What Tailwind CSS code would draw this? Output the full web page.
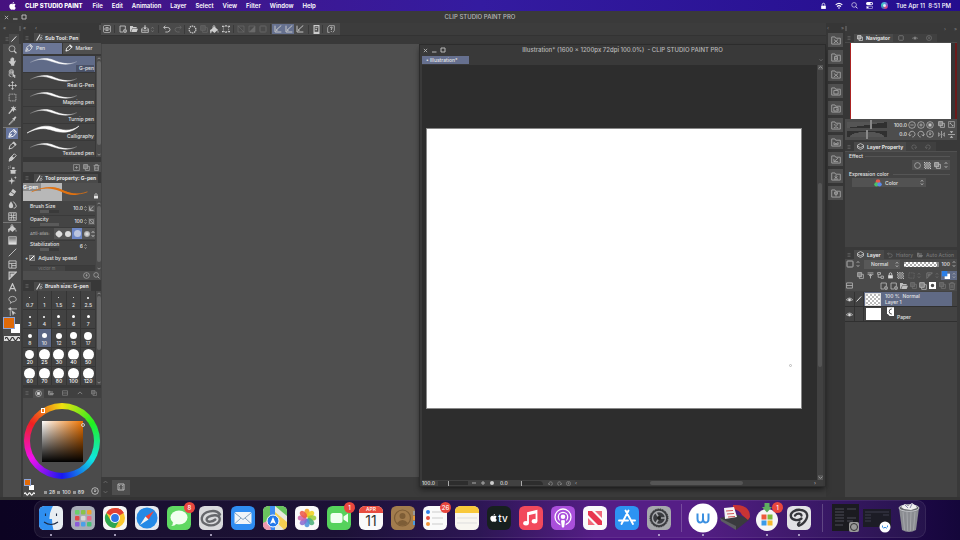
<!DOCTYPE html>
<html lang="en">
<head>
<meta charset="utf-8">
<title>CLIP STUDIO PAINT PRO</title>
<script src="https://cdn.jsdelivr.net/npm/@tailwindcss/browser@4"></script>
</head>
<body class="h-screen overflow-hidden flex flex-col bg-[#3b3b3b] text-[#e4e4e4] font-['Inter','Liberation_Sans',sans-serif] text-[5px] leading-[8px] font-medium select-none">

<svg class="absolute size-0" aria-hidden="true">
  <defs>
    <linearGradient id="fade" x1="0" x2="1"><stop offset="0" stop-color="#fff" stop-opacity=".15"/><stop offset=".3" stop-color="#fff"/><stop offset=".75" stop-color="#fff"/><stop offset="1" stop-color="#fff" stop-opacity=".15"/></linearGradient>
    <linearGradient id="greyfade" x1="0" x2="0" y1="0" y2="1"><stop offset="0" stop-color="#666"/><stop offset="1" stop-color="#eee"/></linearGradient>
  </defs>
  <symbol id="apple" viewBox="0 0 12 14"><path fill="currentColor" d="M8.700 0c.1 1.500-1.200 3-2.700 3C5.800 1.500 7.200.1 8.700 0zM6.200 3.800c.7 0 1.500-.7 2.700-.6 1 0 2 .6 2.500 1.400-2.200 1.400-1.800 4.400.4 5.300C11 12 10 13.600 8.700 13.600c-.9 0-1.300-.5-2.300-.5s-1.500.5-2.300.5C2.400 13.600.4 10.400.4 7.600c0-2.900 1.800-4.400 3.500-4.400 1 0 1.800.6 2.300.6z"/></symbol>
  <symbol id="search" viewBox="0 0 12 12"><circle cx="5.300" cy="5" r="4" fill="none" stroke="currentColor"/><path d="M8.200 8l3 3" stroke="currentColor" stroke-width="1.500"/></symbol>
  <symbol id="hand" viewBox="0 0 12 12"><path fill="currentColor" d="M3.200 5.500V2.300q.7-.8 1.200 0V1.200q.7-.8 1.300 0v-.5q.7-.7 1.300 0v1q.7-.7 1.200 0V6l1.400-1.300q1-.3 1 .5L8.300 9.600V11.500H4.200V10L1 6.500q-.3-1.200.8-1z"/></symbol>
  <symbol id="object" viewBox="0 0 12 12"><g fill="none" stroke="currentColor"><circle cx="4.500" cy="3.800" r="3"/><path d="M1.500 6v3l3 1.500M4.500 3.800l3 2M3 2.500h3v2.500H3z"/></g><path fill="currentColor" d="M6 5.500l5 4-2 .2.900 2-1.300.3-.8-2L6.200 11z"/></symbol>
  <symbol id="move" viewBox="0 0 12 12"><path d="M6 1.500v9M1.500 6h9" stroke="currentColor"/><path fill="currentColor" d="M6 0l2 2.500H4zM6 12l2-2.500H4zM0 6l2.500-2v4zM12 6L9.500 4v4z"/></symbol>
  <symbol id="marquee" viewBox="0 0 12 12"><rect x="1.500" y="1.500" width="9" height="9" fill="none" stroke="currentColor" stroke-dasharray="2 1"/></symbol>
  <symbol id="wand" viewBox="0 0 12 12"><path d="M1 11.500L6 6" stroke="currentColor" stroke-width="1.800"/><path fill="currentColor" d="M7 .5l1 2.800 3-1-1.700 2.500L11.500 7l-3-.3L7.500 9.500 6.300 7 3.500 7l2-2L4 2.500l2.500.6z"/></symbol>
  <symbol id="dropper" viewBox="0 0 12 12"><path fill="currentColor" d="M7.200 3l2-2.200q1.600-.5 2 1.200L9 4.500l.6.7-1 1L5.700 3.500l1-1z"/><path d="M7 4.800L2.200 9.600l-1 1.800 1.800-.8L8 5.800" stroke="currentColor" fill="none"/></symbol>
  <symbol id="pen" viewBox="0 0 12 12"><path d="M1 11l1.500-6L6.500 2l3.800 4L7 9.800z" fill="none" stroke="currentColor" stroke-width="1.200"/><path fill="currentColor" d="M6.500.8L8 0l4 4-.9 1.400zM1 11l3-5 1.500 1.500z"/></symbol>
  <symbol id="pencil" viewBox="0 0 12 12"><path d="M1.500 10.500l1-4.500L7 2.500l2.800 3L5.500 9.500z" fill="none" stroke="currentColor" stroke-width="1.300"/><path fill="currentColor" d="M5.800 1.500L8 .6l3.500 3.700L10 6.500zM1 11.200l.5-3 2.300 2z"/></symbol>
  <symbol id="brush" viewBox="0 0 12 12"><path d="M1.500 10.500l1-3.500L8.500 1l2.500 2.500L5 9.500z" fill="none" stroke="currentColor" stroke-width="1.300"/><path fill="currentColor" d="M5 3.500L8.500 7 5 10 1 11.500 2.300 7z"/></symbol>
  <symbol id="airbrush" viewBox="0 0 12 12"><path fill="currentColor" d="M3 6.500h8.500l-.8 1.300H10V11.500H3.500V7.800H3zM5.500 3h3.300v2.700H5.500z"/><path d="M.5 2.500h1M2.500 1.500h1M2.500 3.500h1M.5 4.800h1" stroke="currentColor"/></symbol>
  <symbol id="spark" viewBox="0 0 12 12"><path fill="currentColor" d="M5 1.500l1.100 3.900L10 6.500 6.100 7.600 5 11.500 3.900 7.600 0 6.500l3.900-1.100zM9.800 0l.5 1.600 1.600.5-1.600.5-.5 1.600-.5-1.600L7.700 2.100l1.600-.5z"/></symbol>
  <symbol id="eraser" viewBox="0 0 12 12"><path fill="currentColor" d="M6.500 1L11 4.500 8.500 8 4 4.700zM3.400 5.400L8 8.800 6.500 10.800H3L.8 8.800z"/></symbol>
  <symbol id="blend" viewBox="0 0 12 12"><path fill="currentColor" d="M4 1.500q3 4 3 6.500a3 3 0 0 1-6 0q0-2.500 3-6.500z"/><path d="M7 2q4 4 4 6a2.700 2.700 0 0 1-3.500 2.700" stroke="currentColor" stroke-width="1.300" fill="none"/></symbol>
  <symbol id="liquify" viewBox="0 0 12 12"><path d="M1 1h10v10H1zM4 1q2 5 0 10M8 1q-2 5 0 10M1 4q5 2 10 0M1 8q5-2 10 0" fill="none" stroke="currentColor" stroke-width="1.100"/></symbol>
  <symbol id="bucket" viewBox="0 0 12 12"><path fill="currentColor" d="M5.500 2L11 6.500q-2 .3-5 4.300L1 6.500zM10.500 7l1 2.500q-.7 1.300-1.500 0zM0 7l1.500-1.500L2.500 8 1.500 11H.5z"/><path d="M4 5V1.500q1.500-1.500 2.500 0V5" stroke="currentColor" fill="none"/></symbol>
  <symbol id="gradient" viewBox="0 0 12 12"><rect x="1" y="1" width="10" height="10" fill="url(#greyfade)" stroke="#ccc"/></symbol>
  <symbol id="line" viewBox="0 0 12 12"><path d="M1 11L11 1" stroke="currentColor" stroke-width="1.200"/></symbol>
  <symbol id="frame" viewBox="0 0 12 12"><path d="M1.200 1.200h9.600v9.600H1.200zM1.200 4.500h9.600M5 4.500v6.300M5 7.500h5.800" fill="none" stroke="currentColor" stroke-width="1.200"/></symbol>
  <symbol id="ruler" viewBox="0 0 12 12"><path d="M1.500 1.500h9.500L1.500 11zM4 4h2.500L4 6.500z" fill="none" stroke="currentColor" stroke-width="1.600"/></symbol>
  <symbol id="text" viewBox="0 0 12 12"><path d="M1.500 11L6 1l4.500 10M3.300 7.500h5.400" fill="none" stroke="currentColor" stroke-width="1.600"/></symbol>
  <symbol id="balloon" viewBox="0 0 12 12"><path d="M4 9Q1 8 1 5.200 1.500 1.800 6 1.800t5 3.400T6 9.200L3 11.200z" fill="none" stroke="currentColor"/></symbol>
  <symbol id="correct" viewBox="0 0 12 12"><path d="M0 2.500h12M3 0v12" stroke="currentColor"/><path fill="currentColor" d="M4.500 4l6.500 4.500-2.800.3L6.500 11.500zM1.700 1.200h2.700v2.700H1.700z"/></symbol>
  <symbol id="nib" viewBox="0 0 12 12"><path d="M1 11L10.500.8" stroke="currentColor" stroke-width="2"/></symbol>
  <symbol id="brushset" viewBox="0 0 12 12"><path d="M1 11L7 1" stroke="currentColor" stroke-width="1.800"/><path d="M6.500 9l2-4 2 2.500-2.500 3zM10 4V2" stroke="currentColor" fill="none"/></symbol>
  <symbol id="new" viewBox="0 0 12 12"><path d="M6 10.500H1.500v-9h8V6" fill="none" stroke="currentColor" stroke-width="1.200"/><circle cx="9" cy="9" r="2.500" fill="none" stroke="currentColor"/><path d="M9 7.500v3M7.500 9h3" stroke="currentColor"/></symbol>
  <symbol id="folder" viewBox="0 0 12 12"><path fill="currentColor" d="M0 10.500V1.500h4l1 1.500h5v2H3.500L1 10zM3.800 5.800H12L10 10.500H1.800z"/></symbol>
  <symbol id="save" viewBox="0 0 12 12"><path d="M1 6v5h10V6L9.500 4M1 6l1.500-2M1 7.500h3l1 1.300h2l1-1.300h3" fill="none" stroke="currentColor" stroke-width="1.200"/><path fill="currentColor" d="M5.200.5h1.600v3.300h2L6 7 3.200 3.800h2z"/></symbol>
  <symbol id="spin" viewBox="0 0 6 12"><path d="M1 4.500L3 2l2 2.500M1 7.500L3 10l2-2.500" fill="none" stroke="currentColor"/></symbol>
  <symbol id="undo" viewBox="0 0 12 12"><path d="M3.500 1L1 3.700l2.700 2.500M1.200 3.700H7q3.500.3 3.500 3.200T7 10.500H3.500" fill="none" stroke="currentColor" stroke-width="1.300"/></symbol>
  <symbol id="redo" viewBox="0 0 12 12"><path d="M8.500 1L11 3.700 8.300 6.200M10.800 3.700H5q-3.500.3-3.500 3.200T5 10.500h3.500" fill="none" stroke="currentColor" stroke-width="1.300"/></symbol>
  <symbol id="burst" viewBox="0 0 12 12"><circle cx="6" cy="6" r="4.500" fill="none" stroke="currentColor" stroke-width="1.700" stroke-dasharray="1.900 .9"/></symbol>
  <symbol id="layers2" viewBox="0 0 12 12"><path d="M1 1h7v7H1z" fill="currentColor" fill-opacity=".5"/><path d="M1 1h7v7H1zM8 4h3v7H4V8" fill="none" stroke="currentColor" stroke-width="1.200"/></symbol>
  <symbol id="crop" viewBox="0 0 12 12"><path d="M2 2h8v8H2z" fill="none" stroke="currentColor" stroke-dasharray="2 1"/><path fill="currentColor" d="M0 1h2.500v2H0zM9.500 1H12v2H9.500zM0 9h2.500v2H0zM9.500 9H12v2H9.500zM5 0h2v2H5zM5 10h2v2H5z"/></symbol>
  <symbol id="desel" viewBox="0 0 12 12"><path d="M1.500 1.500h9v9h-9zM1 1l10 10" fill="none" stroke="currentColor"/></symbol>
  <symbol id="invert" viewBox="0 0 12 12"><path d="M1.500 1.500h9v9h-9z" fill="none" stroke="currentColor"/><path d="M10.500 1.500v9h-9z" fill="currentColor"/></symbol>
  <symbol id="square" viewBox="0 0 12 12"><rect x="1.500" y="1.500" width="9" height="9" rx="1" fill="none" stroke="currentColor" stroke-width="1.300"/></symbol>
  <symbol id="snap" viewBox="0 0 12 12"><path d="M1.500 1v9.500H11M4 7L11 .5" fill="none" stroke="currentColor" stroke-width="1.400"/><path fill="currentColor" d="M3 9l.5-3 2.500 2z"/></symbol>
  <symbol id="phone" viewBox="0 0 12 12"><path fill="currentColor" fill-rule="evenodd" d="M2 0h8v12H2zm1.500 1.500v7.500h5V1.500zM4.500 3h3v1h-3zm0 2h2v2h-2z"/></symbol>
  <symbol id="help" viewBox="0 0 12 12"><path d="M4 11H1V4l2-3h8v7L9 11" fill="none" stroke="currentColor"/><path d="M5 4.500q.7-2 2.300-1.300T6.500 6v1.500M6.500 9v1.300" stroke="currentColor" stroke-width="1.300" fill="none"/></symbol>
  <symbol id="swirl" viewBox="0 0 12 12"><rect x=".7" y=".7" width="10.600" height="10.600" rx="2" fill="none" stroke="currentColor"/><path d="M2 6q4-5 8 0-4 5-8 0z" fill="none" stroke="currentColor"/><circle cx="6" cy="6" r="1.700" fill="none" stroke="currentColor"/></symbol>
  <symbol id="plusbox" viewBox="0 0 12 12"><path d="M1 1h10v10H1zM6 3.500v5M3.500 6h5" fill="none" stroke="currentColor" stroke-width="1.100"/></symbol>
  <symbol id="trash" viewBox="0 0 12 12"><path d="M1 2.700h10M4 2.500V1h4v1.500M2.300 3l.5 8.300h6.400L9.700 3M4.700 4.500v5M7.300 4.500v5" fill="none" stroke="currentColor" stroke-width="1.200"/></symbol>
  <symbol id="lock" viewBox="0 0 12 12"><path fill="currentColor" d="M2 5.500h8V11H2z"/><path d="M3.800 5.500V3.500a2.200 2.200 0 0 1 4.400 0v2" fill="none" stroke="currentColor" stroke-width="1.300"/></symbol>
  <symbol id="clock" viewBox="0 0 12 12"><circle cx="6" cy="6" r="5" fill="none" stroke="currentColor"/><path d="M6 3v4l-1.500-1M6 7l2-1.500" stroke="currentColor" fill="none"/></symbol>
  <symbol id="minus" viewBox="0 0 12 12"><circle cx="6" cy="6" r="5" fill="none" stroke="currentColor"/><path d="M3.500 6h5" stroke="currentColor"/></symbol>
  <symbol id="plus" viewBox="0 0 12 12"><circle cx="6" cy="6" r="5" fill="none" stroke="currentColor"/><path d="M3.500 6h5M6 3.500v5" stroke="currentColor"/></symbol>
  <symbol id="dot" viewBox="0 0 12 12"><circle cx="6" cy="6" r="5" fill="none" stroke="currentColor"/><path d="M3.700 3.700h4.600v4.600H3.700z" fill="currentColor"/></symbol>
  <symbol id="rotl" viewBox="0 0 12 12"><path d="M2.500 8.500a4.300 4.300 0 1 1 4 2M.8 6.500l1.700 2.300L5 7" fill="none" stroke="currentColor" stroke-width="1.100"/></symbol>
  <symbol id="rotr" viewBox="0 0 12 12"><path d="M9.500 8.500a4.300 4.300 0 1 0-4 2M11.200 6.500L9.500 8.800 7 7" fill="none" stroke="currentColor" stroke-width="1.100"/></symbol>
  <symbol id="fliph" viewBox="0 0 12 12"><path d="M6 0v12M.5 3v6L4 6zM11.500 3v6L8 6z" fill="none" stroke="currentColor" stroke-width="1.100"/></symbol>
  <symbol id="flipv" viewBox="0 0 12 12"><path d="M0 6h12" stroke="currentColor" stroke-width="1.200"/><path d="M3 .5h6L6 4zM3 11.500h6L6 8z" fill="currentColor"/></symbol>
  <symbol id="clip" viewBox="0 0 12 12"><path d="M1 1.500h10M1 4h10" stroke="currentColor" stroke-width="1.300"/><path d="M6 4v7M3.500 7L6 4.500 8.500 7" fill="none" stroke="currentColor" stroke-width="1.500"/></symbol>
  <symbol id="refer" viewBox="0 0 12 12"><path d="M1 1h5v3H1zM2 4v5h5M7 7h4v4H7z" fill="none" stroke="currentColor" stroke-width="1.400"/></symbol>
  <symbol id="fit" viewBox="0 0 12 12"><path d="M1 1h10v10H1zM3.500 5.500v-2h2M8.500 6.500v2h-2M3.500 3.500l5 5" fill="none" stroke="currentColor"/></symbol>
  <symbol id="stack" viewBox="0 0 12 12"><path d="M6 1l5 2.500v5L6 11 1 8.500v-5zM1 5.500L6 8l5-2.500" fill="none" stroke="currentColor" stroke-width="1.200"/></symbol>
  <symbol id="list" viewBox="0 0 12 12"><path d="M1 1.500h10v9H1zM1 6h10" fill="none" stroke="currentColor" stroke-width="1.300"/></symbol>
  <symbol id="eye" viewBox="0 0 12 12"><path d="M.5 6.500Q6 .5 11.500 6.500 6 11 .5 6.500z" fill="none" stroke="currentColor"/><circle cx="6" cy="6.300" r="2.200" fill="currentColor"/></symbol>
  <symbol id="tone" viewBox="0 0 12 12"><path fill="currentColor" d="M0 0h2v2H0zM4 0h2v2H4zM8 0h2v2H8zM2 2h2v2H2zM6 2h2v2H6zM10 2h2v2h-2zM0 4h2v2H0zM4 4h2v2H4zM8 4h2v2H8zM2 6h2v2H2zM6 6h2v2H6zM10 6h2v2h-2zM0 8h2v2H0zM4 8h2v2H4zM8 8h2v2H8zM2 10h2v2H2zM6 10h2v2H6zM10 10h2v2h-2z"/></symbol>
  <symbol id="mask" viewBox="0 0 12 12"><path fill="currentColor" fill-rule="evenodd" d="M0 0h12v12H0zM6 3a3 3 0 1 0 0 6 3 3 0 0 0 0-6z"/></symbol>
  <symbol id="grip" viewBox="0 0 6 8"><path d="M0 1h6M0 4h6M0 7h6" stroke="#777"/></symbol>
  <symbol id="down" viewBox="0 0 8 6"><path d="M1 1.500l3 3 3-3" fill="none" stroke="currentColor" stroke-width="1.200"/></symbol>
  <symbol id="up" viewBox="0 0 8 6"><path d="M1 4.500l3-3 3 3" fill="none" stroke="currentColor" stroke-width="1.200"/></symbol>
</svg>

<!-- System menu bar -->
<header class="h-[11px] shrink-0 flex items-center bg-linear-to-r from-[#46117f] via-[#341ba0] to-[#240d8e] text-white text-[6px] leading-[10px] font-semibold pr-[9px]">
  <svg class="w-[7px] h-[8px] ml-[9px]"><use href="#apple"/></svg>
  <nav class="flex gap-[9px] ml-[9px]">
    <a href="#" class="font-extrabold mr-px">CLIP STUDIO PAINT</a><a href="#">File</a><a href="#">Edit</a><a href="#">Animation</a><a href="#">Layer</a><a href="#">Select</a><a href="#">View</a><a href="#">Filter</a><a href="#">Window</a><a href="#">Help</a>
  </nav>
  <div class="ml-auto flex items-center gap-[8px]">
    <svg class="w-[7px] h-[8px]"><use href="#lock"/></svg>
    <svg class="w-[8px] h-[7px]" viewBox="0 0 12 10"><path d="M1 4q5-4.500 10 0M3 6.500q3-2.500 6 0" fill="none" stroke="#fff" stroke-width="1.600"/><circle cx="6" cy="8.700" r="1.200" fill="#fff"/></svg>
    <svg class="w-[7px] h-[7px]"><use href="#search"/></svg>
    <svg class="w-[7px] h-[7px]" viewBox="0 0 12 12"><rect width="12" height="5.300" rx="2.600" fill="#fff"/><circle cx="9" cy="2.700" r="1.500" fill="#341ba0"/><rect x=".6" y="7" width="10.800" height="4.500" rx="2.200" fill="none" stroke="#fff"/><circle cx="3" cy="9.200" r="1.500" fill="#fff"/></svg>
    <span class="w-[7px] h-[7px] rounded-full bg-[conic-gradient(#5ad,#85c,#e47,#47b,#3cb,#5ad)] grid place-items-center"><i class="size-[3px] rounded-full bg-white/80"></i></span>
    <span class="whitespace-nowrap font-medium">Tue Apr 11&nbsp; 8:51 PM</span>
  </div>
</header>

<!-- Application title bar -->
<div class="h-[12px] shrink-0 flex items-center bg-[#3a3a3a] text-[#b9b9b9] relative">
  <div class="flex gap-[3px] ml-[4px]">
    <button aria-label="Close"><svg class="size-[5px]" viewBox="0 0 6 6"><path d="M1 1l4 4M5 1L1 5" stroke="currentColor"/></svg></button>
    <button aria-label="Minimise"><svg class="size-[6px]" viewBox="0 0 6 6"><path d="M1 5h4.500" stroke="currentColor"/></svg></button>
    <button aria-label="Zoom"><svg class="size-[6px]" viewBox="0 0 6 6"><path d="M1 1h4v4H1z" fill="none" stroke="currentColor"/></svg></button>
  </div>
  <h1 class="absolute inset-x-0 text-center text-[6px] leading-[12px]">CLIP STUDIO PAINT PRO</h1>
</div>

<main class="flex-1 min-h-0 flex">
  <!-- Tool palette -->
  <aside class="w-[23px] shrink-0 pl-[3px] pr-[2px] flex flex-col">
    <div class="h-[10px] flex items-center justify-between text-[#8a8a8a]"><span>«</span><i class="w-[2px] h-[5px] bg-[#555]"></i></div>
    <div class="h-[11px] flex items-center justify-between px-[2px]"><svg class="w-[4px] h-[4px]"><use href="#grip"/></svg><span class="bg-[#4a4a4a] p-[2px]"><svg class="size-[6px]"><use href="#nib"/></svg></span></div>
    <div class="flex-1 bg-[#4b4b4b] flex flex-col items-center text-[#c9c9c9]">
      <div id="tools" class="flex flex-col w-full"></div>
      <div class="w-full h-[17px] relative">
        <button aria-label="Sub colour" class="absolute left-[8px] top-[7px] size-[9px] bg-white"></button>
        <button aria-label="Main colour" class="absolute left-0 top-0 size-[12px] bg-[#e06a08] border border-[#8fa5d8]"></button>
      </div>
      <button aria-label="Transparent" class="w-[16px] h-[5px] mt-[2px] bg-[#ddd] grid place-items-center"><svg class="w-[15px] h-[4px]" viewBox="0 0 15 4"><path d="M0 2q1.500-3 3 0t3 0 3 0 3 0 3 0" fill="none" stroke="#333" stroke-width="1.200"/></svg></button>
    </div>
  </aside>

  <!-- Sub tool, property, size and colour palettes -->
  <aside class="w-[78px] shrink-0 flex flex-col bg-[#383838]">
    <div class="h-[10px] flex items-center text-[#8a8a8a]"><span>«</span><span class="ml-[9px]">‹</span><i class="ml-auto w-[2px] h-[5px] bg-[#555]"></i></div>
    <div class="h-[10px] flex items-center pl-[2px] gap-[5px]"><svg class="size-[4px]"><use href="#grip"/></svg><h2 class="bg-[#4a4a4a] h-[9px] px-[2px] flex items-center gap-[2px] font-bold"><svg class="size-[7px]"><use href="#brushset"/></svg>Sub Tool: Pen</h2></div>
    <div class="h-[12px] grid grid-cols-2 gap-px">
      <button class="bg-[#6b7696] flex items-center gap-[3px] pl-[2px]"><svg class="size-[8px]"><use href="#pen"/></svg>Pen</button>
      <button class="bg-[#4f4f4f] flex items-center gap-[3px] pl-[2px]"><svg class="size-[8px]"><use href="#pencil"/></svg>Marker</button>
    </div>
    <div class="flex mt-[2px]">
      <div id="brushes" class="flex-1 flex flex-col gap-px"></div>
      <div class="w-[5px] ml-px bg-[#4a4a4a] flex flex-col items-center text-[#bbb]"><svg class="w-[4px] h-[5px]"><use href="#up"/></svg><i class="w-[4px] h-[84px] bg-[#666] rounded-xs"></i><svg class="w-[4px] h-[5px] mt-auto"><use href="#down"/></svg></div>
    </div>
    <div class="h-[10px] mt-[5px] bg-[#4d4d4d] flex items-center justify-end gap-[3px] pr-[1px] text-[#aaa]">
      <button aria-label="Add"><svg class="size-[7px]"><use href="#plusbox"/></svg></button><button aria-label="Duplicate"><svg class="size-[7px]"><use href="#layers2"/></svg></button><button aria-label="Delete"><svg class="size-[7px]"><use href="#trash"/></svg></button>
    </div>

    <div class="h-[10px] mt-px flex items-center pl-[2px] gap-[5px]"><svg class="size-[4px]"><use href="#grip"/></svg><h2 class="bg-[#4a4a4a] h-[9px] px-[2px] flex items-center gap-[2px] font-bold whitespace-nowrap"><svg class="size-[7px]"><use href="#brushset"/></svg>Tool property: G-pen</h2></div>
    <div class="h-[18px] flex bg-[#505050] relative">
      <div class="w-1/2 bg-[#b8b8b8]"><span class="block w-[18px] h-[8px] bg-[#8b8b8b] text-white">G-pen</span></div>
      <svg class="absolute inset-0 w-full h-full" viewBox="0 0 78 18"><path d="M8 9C20 4 30 3 38 7s17 6 27 2" fill="none" stroke="#e27210" stroke-width=".8"/><path d="M15 6.500C26 3 33 4 39 7s14 5 20 3.500C51 14 45 12 37 8.500S24 5 15 6.500z" fill="#e27210"/></svg>
      <svg class="absolute right-[2px] bottom-[2px] size-[6px]"><use href="#lock"/></svg>
    </div>
    <div class="flex h-[70px] bg-[#444]">
      <div class="flex-1 pl-[7px] pt-px overflow-hidden flex flex-col">
        <div class="h-[13px] flex items-center justify-between"><label for="bs" class="flex flex-col leading-[7px] whitespace-nowrap">Brush Size<span class="w-[19px] h-[3px] flex bg-[#3a3a3a] ml-[10px]"><i class="w-[9px] bg-[#5a5a5a]"></i></span></label><span class="flex items-center gap-px"><input id="bs" value="10.0" class="w-[13px] text-right"><svg class="w-[3px] h-[7px]"><use href="#spin"/></svg><button aria-label="Pressure" class="size-[7px] bg-[#555] p-px"><svg class="size-[5px]"><use href="#snap"/></svg></button></span></div>
        <div class="h-[12px] flex items-center justify-between border-t border-[#3a3a3a]"><label for="op" class="flex flex-col leading-[7px] whitespace-nowrap">Opacity<span class="w-[19px] h-[3px] bg-[#5a5a5a] ml-[10px]"></span></label><span class="flex items-center gap-px"><input id="op" value="100" class="w-[13px] text-right"><svg class="w-[3px] h-[7px]"><use href="#spin"/></svg><button aria-label="Dynamics" class="size-[7px] bg-[#555] p-px"><svg class="size-[5px]"><use href="#desel"/></svg></button></span></div>
        <div class="h-[13px] flex items-center justify-between border-t border-[#3a3a3a]"><span class="text-[#aaa] text-[4px] whitespace-nowrap">Anti-alias:</span><span class="flex bg-[#555] items-center"><button aria-label="None" class="w-[9px] h-[11px] grid place-items-center"><i class="size-[6px] rounded-xs rotate-45 bg-[#ddd]"></i></button><button aria-label="Weak" class="w-[9px] h-[11px] grid place-items-center"><i class="size-[6px] rounded-full bg-[#ddd]"></i></button><button aria-label="Middle" class="w-[10px] h-[11px] bg-[#6d86c4] grid place-items-center"><i class="size-[7px] rounded-full bg-[#bcc5dd]"></i></button><button aria-label="Strong" class="w-[9px] h-[11px] grid place-items-center"><i class="size-[6px] rounded-full bg-radial from-[#eee] to-[#888]"></i></button><svg class="w-[4px] h-[8px]"><use href="#spin"/></svg></span></div>
        <div class="h-[12px] flex items-center justify-between border-t border-[#3a3a3a] pr-[8px]"><label for="sb" class="flex flex-col leading-[7px] whitespace-nowrap">Stabilization<span class="w-[19px] h-[3px] flex bg-[#3a3a3a] ml-[10px]"><i class="w-[9px] bg-[#5a5a5a]"></i></span></label><span class="flex items-center gap-px"><input id="sb" value="6" class="w-[8px] text-right"><svg class="w-[3px] h-[7px]"><use href="#spin"/></svg></span></div>
        <div class="h-[13px] -ml-[5px] flex items-center gap-px"><span>+</span><input id="sp" type="checkbox" checked class="appearance-none size-[6px] bg-[#666] checked:bg-[linear-gradient(135deg,#666_45%,#fff_45%,#fff_60%,#666_60%)] border border-[#888]"><label for="sp" class="pl-[2px] whitespace-nowrap">Adjust by speed</label></div>
        <div class="h-[6px] overflow-hidden flex justify-between text-[#777] leading-[6px] border-t border-[#3a3a3a]"><span class="pl-[8px] text-[4px]">Vector m</span><span class="w-[30px] bg-[#3c3c3c]"></span></div>
      </div>
      <div class="w-[5px] ml-px bg-[#4a4a4a] flex flex-col items-center text-[#bbb]"><svg class="w-[4px] h-[5px]"><use href="#up"/></svg><i class="w-[4px] h-[56px] bg-[#666] rounded-xs"></i><svg class="w-[4px] h-[5px] mt-auto"><use href="#down"/></svg></div>
    </div>
    <div class="h-[10px] bg-[#4d4d4d] flex items-center justify-end gap-[3px] pr-[1px] text-[#bbb]"><button aria-label="Reset"><svg class="size-[7px]"><use href="#clock"/></svg></button><button aria-label="Details"><svg class="size-[7px]"><use href="#search"/></svg></button></div>

    <div class="h-[10px] mt-px flex items-center pl-[2px] gap-[5px]"><svg class="size-[4px]"><use href="#grip"/></svg><h2 class="bg-[#4a4a4a] h-[9px] px-[2px] flex items-center gap-[2px] font-bold whitespace-nowrap"><svg class="size-[7px]"><use href="#brushset"/></svg>Brush size: G-pen</h2></div>
    <div class="flex h-[96px] overflow-hidden">
      <div id="sizes" class="flex-1 grid grid-cols-5 auto-rows-[18px] gap-px bg-[#353535]"></div>
      <div class="w-[5px] ml-px bg-[#4a4a4a] flex flex-col items-center text-[#bbb]"><svg class="w-[4px] h-[5px]"><use href="#up"/></svg><i class="w-[4px] h-[54px] bg-[#666] rounded-xs"></i><svg class="w-[4px] h-[5px] mt-auto"><use href="#down"/></svg></div>
    </div>

    <div class="h-[10px] mt-[3px] flex items-center text-[#888] bg-[#404040]"><svg class="size-[4px] ml-[2px]"><use href="#grip"/></svg><span class="bg-[#4f4f4f] ml-[4px] px-[2px] py-px text-[#ddd]"><svg class="size-[7px]"><use href="#dot"/></svg></span>
      <span class="flex-1 flex justify-around"><svg class="size-[6px]"><use href="#folder"/></svg><svg class="size-[6px]"><use href="#list"/></svg><svg class="size-[6px]"><use href="#up"/></svg><svg class="size-[6px]"><use href="#layers2"/></svg></span></div>
    <div class="flex-1 bg-[#4b4b4b] flex flex-col">
      <div class="size-[76px] mx-auto mt-[5px] rounded-full bg-[conic-gradient(from_300deg,#f02020,#f0e010,#20f020,#10e8e0,#1818f0,#f010f0,#f02020)] grid place-items-center relative">
        <div class="size-[64px] rounded-full bg-[#4b4b4b] grid place-items-center"><div class="size-[41px] bg-[linear-gradient(to_top,#000,transparent),linear-gradient(to_right,#fff,#f07400)]"></div></div>
        <i class="absolute left-[17px] top-[5px] w-[4px] h-[5px] border border-white"></i>
        <i class="absolute left-[57px] top-[20px] size-[4px] rounded-full border border-[#ccc]"></i>
      </div>
      <div class="flex-1 flex items-end pb-px">
        <div class="w-[13px] h-[17px] relative ml-px"><i class="absolute left-[5px] top-[6px] size-[5px] bg-white"></i><i class="absolute left-0 top-0 size-[7px] bg-[#e06a08] border border-[#8fa5d8]"></i><svg class="absolute left-0 bottom-0 w-[11px] h-[4px]" viewBox="0 0 15 4"><path d="M0 2q1.500-3 3 0t3 0 3 0 3 0 3 0" fill="none" stroke="#fff" stroke-width="1.500"/></svg></div>
        <div class="flex gap-[2px] items-center ml-[7px]"><i class="size-[3px] bg-[#999]"></i>28<i class="size-[3px] bg-[#999]"></i>100<i class="size-[3px] bg-[#999]"></i>89</div>
        <svg class="size-[8px] ml-auto mr-[2px] mb-px"><use href="#clock"/></svg>
      </div>
    </div>
  </aside>

  <!-- Workspace -->
  <section class="flex-1 min-w-0 flex flex-col relative">
    <div class="h-[12px] flex items-center bg-[#3c3c3c]">
      <div class="h-[12px] bg-[#4a4a4a] text-[#cdcdcd] flex items-center">
        <button aria-label="Clip Studio" class="w-[12px] grid place-items-center"><svg class="size-[8px]"><use href="#swirl"/></svg></button>
        <div class="flex border-l border-[#3a3a3a] ml-px pl-[2px] items-center"><button aria-label="New" class="w-[11px] grid place-items-center"><svg class="size-[8px]"><use href="#new"/></svg></button><button aria-label="Open" class="w-[11px] grid place-items-center"><svg class="size-[8px]"><use href="#folder"/></svg></button><button aria-label="Save" class="w-[11px] grid place-items-center"><svg class="size-[8px]"><use href="#save"/></svg></button><svg class="w-[5px] h-[7px] text-[#888]"><use href="#spin"/></svg></div>
        <div class="flex border-l border-[#3a3a3a] ml-[3px] pl-[2px]"><button aria-label="Undo" class="w-[11px] grid place-items-center"><svg class="size-[8px]"><use href="#undo"/></svg></button><button aria-label="Redo" class="w-[11px] grid place-items-center text-[#666]"><svg class="size-[8px]"><use href="#redo"/></svg></button></div>
        <div class="flex border-l border-[#3a3a3a] ml-px pl-[2px]"><button aria-label="Clear" class="w-[11px] grid place-items-center"><svg class="size-[9px]"><use href="#burst"/></svg></button><button aria-label="Clear outside" class="w-[11px] grid place-items-center text-[#666]"><svg class="size-[8px]"><use href="#layers2"/></svg></button><button aria-label="Fill" class="w-[11px] grid place-items-center"><svg class="size-[9px]"><use href="#bucket"/></svg></button><button aria-label="Transform" class="w-[11px] grid place-items-center"><svg class="size-[8px]"><use href="#crop"/></svg></button></div>
        <div class="flex border-l border-[#3a3a3a] ml-[2px] pl-px text-[#6a6a6a]"><button aria-label="Deselect" class="w-[11px] grid place-items-center"><svg class="size-[8px]"><use href="#desel"/></svg></button><button aria-label="Invert" class="w-[11px] grid place-items-center"><svg class="size-[8px]"><use href="#invert"/></svg></button><button aria-label="Selection border" class="w-[11px] grid place-items-center"><svg class="size-[8px]"><use href="#square"/></svg></button></div>
        <div class="flex border-l border-[#3a3a3a] ml-[2px] pl-px"><button aria-label="Snap to ruler" class="w-[11px] h-[10px] bg-[#66718f] grid place-items-center"><svg class="size-[8px]"><use href="#snap"/></svg></button><button aria-label="Snap to special ruler" class="w-[11px] h-[10px] bg-[#66718f] grid place-items-center"><svg class="size-[8px]"><use href="#snap"/></svg></button><button aria-label="Snap to grid" class="w-[12px] grid place-items-center"><svg class="size-[8px]"><use href="#snap"/></svg></button></div>
        <div class="flex border-l border-[#3a3a3a] ml-[2px] pl-[3px] pr-px"><button aria-label="Device" class="w-[9px] grid place-items-center"><svg class="size-[9px]"><use href="#phone"/></svg></button></div>
        <div class="flex border-l border-[#3a3a3a] pl-[2px] pr-[4px]"><button aria-label="Help" class="w-[11px] grid place-items-center"><svg class="size-[8px]"><use href="#help"/></svg></button></div>
      </div>
    </div>
    <div class="h-[9px] bg-[#393939] border-t border-[#333]"></div>
    <div class="flex-1 bg-[#4f4f4f] border-l border-[#444]"></div>
    <div class="h-[20px] flex items-center pl-[2px] bg-[#3b3b3b]"><div class="flex flex-col gap-[6px] text-[#777]"><svg class="w-[5px] h-[4px]"><use href="#up"/></svg><svg class="w-[5px] h-[4px]"><use href="#down"/></svg></div><button aria-label="Timeline" class="ml-[4px] w-[18px] h-[15px] bg-[#4e4e4e] grid place-items-center text-[#ccc]"><svg class="size-[8px]" viewBox="0 0 12 12"><path d="M1.500 1.500h9v9h-9zM4 3v1.500M4 5.500V7M4 8v1.500M8 3v1.500M8 5.500V7M8 8v1.500" fill="none" stroke="currentColor" stroke-width="1.300"/></svg></button></div>

    <!-- Floating document window -->
    <article class="absolute left-[318px] right-0 top-[21px] bottom-[10px] bg-[#393939] border border-[#2c2c2c] shadow-md shadow-black/40 flex flex-col px-[2px]">
      <div class="h-[10px] flex items-center relative text-[#b9b9b9]"><div class="flex gap-[3px] pl-px"><button aria-label="Close"><svg class="size-[5px]" viewBox="0 0 6 6"><path d="M1 1l4 4M5 1L1 5" stroke="currentColor"/></svg></button><button aria-label="Minimise"><svg class="size-[6px]" viewBox="0 0 6 6"><path d="M1 5h4.500" stroke="currentColor"/></svg></button><button aria-label="Zoom"><svg class="size-[6px]" viewBox="0 0 6 6"><path d="M1 1h4v4H1z" fill="none" stroke="currentColor"/></svg></button></div><h2 class="absolute inset-x-0 text-center text-[6px] leading-[10px]">Illustration* (1600 x 1200px 72dpi 100.0%)&nbsp; - CLIP STUDIO PAINT PRO</h2></div>
      <div class="h-[10px] flex items-center justify-between"><button class="bg-[#66708f] w-[47px] h-[8px] text-left pl-[4px] leading-[8px]">• Illustration*</button><svg class="w-[4px] h-[4px] text-[#888]"><use href="#down"/></svg></div>
      <div class="flex-1 min-h-0 flex">
        <div class="flex-1 bg-[#2d2d2d] flex flex-col justify-center pl-[4px] pr-[15px] pb-[8px]"><div class="bg-white border border-[#888] aspect-[375/281] relative"><i class="absolute right-[9px] bottom-[41px] size-[3px] rounded-full border border-[#bbb]"></i></div></div>
        <div class="w-[6px] bg-[#414141] flex flex-col items-center justify-between text-[#aaa]"><svg class="w-[5px] h-[5px] bg-[#555]"><use href="#up"/></svg><i class="w-[4px] h-[184px] mt-[4px] bg-[#555] rounded-xs"></i><svg class="w-[5px] h-[5px] bg-[#555]"><use href="#down"/></svg></div>
      </div>
      <div class="h-[6px] flex items-center bg-[#414141] text-[#ddd] leading-[6px]">
        <label for="zm" class="sr-only">Zoom</label><input id="zm" value="100.0" class="w-[16px] h-[6px]"><i class="w-[11px] h-[5px] bg-[#333] border-r border-[#aaa]"></i><i class="w-[19px] h-[4px] bg-[#2d2d2d]"></i>
        <span class="flex items-center gap-[5px] ml-[4px]"><button aria-label="Zoom out"><svg class="size-[4px]" viewBox="0 0 4 4"><path d="M0 2h4" stroke="#aaa"/></svg></button><button aria-label="Zoom in"><svg class="size-[4px]" viewBox="0 0 4 4"><path d="M0 2h4M2 0v4" stroke="#aaa"/></svg></button><i class="size-[4px] bg-[#ccc] rounded-xs"></i></span>
        <label for="an" class="sr-only">Angle</label><input id="an" value="0.0" class="w-[14px] h-[6px] ml-[6px]"><i class="w-[8px] h-[5px] border-r border-[#aaa]"></i><i class="w-[21px] h-[4px] bg-[#2d2d2d] rounded-tr-full"></i>
        <span class="flex gap-[4px] items-center ml-[5px] text-[#bbb]"><svg class="size-[5px]"><use href="#rotl"/></svg><svg class="size-[5px]"><use href="#rotr"/></svg><svg class="size-[5px]"><use href="#clock"/></svg></span>
        <span class="flex-1 flex items-center ml-[4px] bg-[#3c3c3c]"><span class="text-[#aaa]">‹</span><i class="w-[93px] h-[4px] ml-[73px] bg-[#555] rounded-full"></i><span class="ml-auto mr-[7px] text-[#aaa]">›</span></span>
      </div>
    </article>
  </section>

  <!-- Material folders -->
  <aside class="w-[19px] shrink-0 bg-[#363636] flex flex-col items-center"><div class="h-[10px] w-full flex justify-between items-center px-px text-[#777]"><span>‹</span><span>»</span></div><div id="mats" class="flex flex-col gap-[3px]"></div></aside>

  <!-- Navigator, layer property and layer palettes -->
  <aside class="w-[115px] shrink-0 pr-[3px] bg-[#393939] flex flex-col">
    <div class="h-[11px] flex items-center text-[#777] gap-[8px]"><i class="w-[2px] h-[5px] bg-[#555] mr-auto"></i><span>›</span><span>»</span></div>
    <div class="h-[8px] flex items-center text-[#888]"><svg class="size-[4px] ml-[2px]"><use href="#grip"/></svg><h2 class="bg-[#4a4a4a] h-[8px] ml-[3px] px-[3px] flex items-center gap-[3px] font-bold text-[#e4e4e4]"><svg class="size-[6px]"><use href="#layers2"/></svg>Navigator</h2><span class="flex bg-[#404040] gap-[8px] px-[5px] h-[8px] items-center"><svg class="size-[6px]"><use href="#square"/></svg><svg class="size-[6px]"><use href="#eye"/></svg><svg class="size-[6px]"><use href="#clock"/></svg></span></div>
    <div class="h-[77px] bg-[#363636] border-t border-[#4a4a4a] flex pl-[5px]"><div class="flex-1 bg-white border-l border-[#a22] mr-[4px]"></div><i class="w-[2px] bg-[#6a1a1a]"></i></div>
    <div class="h-[21px] bg-[#4d4d4d] px-[2px] py-px flex flex-col text-[#c4c4c4]">
      <div class="flex-1 flex items-center gap-px"><label for="nz" class="sr-only">Zoom</label><input id="nz" type="range" value="60" class="appearance-none w-[40px] h-[6px] bg-[linear-gradient(to_bottom_right,#555_50%,#303030_50%)] [&::-webkit-slider-thumb]:appearance-none [&::-webkit-slider-thumb]:w-[2px] [&::-webkit-slider-thumb]:h-[9px] [&::-webkit-slider-thumb]:bg-[#888]"><span class="ml-auto text-right text-[#e4e4e4]">100.0</span><svg class="size-[8px]"><use href="#minus"/></svg><svg class="size-[8px]"><use href="#plus"/></svg><svg class="size-[8px]"><use href="#dot"/></svg><svg class="size-[7px] ml-[3px]"><use href="#layers2"/></svg><svg class="size-[7px] ml-[2px]"><use href="#fit"/></svg></div>
      <div class="flex-1 flex items-center gap-px"><label for="nr" class="sr-only">Rotate</label><input id="nr" type="range" value="50" class="appearance-none w-[40px] h-[6px] bg-[radial-gradient(ellipse_at_bottom,#555_60%,#303030_62%)] [&::-webkit-slider-thumb]:appearance-none [&::-webkit-slider-thumb]:w-[2px] [&::-webkit-slider-thumb]:h-[9px] [&::-webkit-slider-thumb]:bg-[#888]"><span class="ml-auto text-right text-[#e4e4e4]">0.0</span><svg class="size-[8px]"><use href="#rotl"/></svg><svg class="size-[8px]"><use href="#rotr"/></svg><svg class="size-[8px]"><use href="#clock"/></svg><svg class="size-[7px] ml-[3px]"><use href="#fliph"/></svg><svg class="size-[7px] ml-[2px]"><use href="#flipv"/></svg></div>
    </div>
    <div class="h-[9px] mt-[2px] flex items-center text-[#777]"><svg class="size-[4px] ml-[2px]"><use href="#grip"/></svg><h2 class="bg-[#4a4a4a] h-[9px] ml-[3px] px-[3px] flex items-center gap-[3px] font-bold text-[#e4e4e4] whitespace-nowrap"><svg class="size-[7px]"><use href="#stack"/></svg>Layer Property</h2><span class="flex bg-[#404040] gap-[8px] px-[5px] h-[9px] items-center"><svg class="size-[6px]"><use href="#rotr"/></svg><svg class="size-[6px]"><use href="#rotl"/></svg></span></div>
    <div class="h-[96px] bg-[#434343] border-t border-[#505050] pl-[4px] pr-[7px]">
      <div class="flex items-center gap-[2px]"><span>Effect</span><i class="flex-1 h-px bg-[#555]"></i></div>
      <div class="flex justify-end"><span class="flex items-center gap-[3px] h-[10px] px-[2px] bg-[#525252] text-[#ccc]"><button aria-label="Border"><svg class="size-[7px]" viewBox="0 0 12 12"><circle cx="6" cy="6" r="5" fill="none" stroke="currentColor"/></svg></button><button aria-label="Tone"><svg class="size-[7px]"><use href="#tone"/></svg></button><button aria-label="Layer colour"><svg class="size-[7px]"><use href="#layers2"/></svg></button><svg class="w-[4px] h-[8px]"><use href="#spin"/></svg></span></div>
      <div class="flex items-center gap-[4px]"><label for="ec">Expression color</label><i class="flex-1 h-px bg-[#555]"></i></div>
      <div class="ml-[3px] w-[74px] h-[9px] bg-[#525252] relative"><select id="ec" class="appearance-none w-full h-[9px] pl-[33px]"><option>Color</option></select>
        <svg class="absolute left-[22px] top-px size-[8px]" viewBox="0 0 12 12"><circle cx="6" cy="4" r="3.500" fill="#e85a4a"/><circle cx="3.700" cy="8" r="3.300" fill="#4ac06a"/><circle cx="8.300" cy="8" r="3.300" fill="#5a8ae8"/></svg><svg class="absolute right-[2px] top-px w-[4px] h-[7px]"><use href="#spin"/></svg></div>
    </div>
    <div class="h-[9px] mt-[3px] flex items-center text-[#777]"><svg class="size-[4px] ml-[2px]"><use href="#grip"/></svg><h2 class="bg-[#4a4a4a] h-[9px] ml-[3px] px-[3px] flex items-center gap-[3px] font-bold text-[#e4e4e4]"><svg class="size-[7px]"><use href="#stack"/></svg>Layer</h2><span class="flex-1 flex bg-[#404040] gap-[3px] px-[3px] h-[9px] items-center justify-between whitespace-nowrap"><svg class="size-[6px]"><use href="#undo"/></svg>History<svg class="size-[6px]"><use href="#folder"/></svg>Auto Action</span></div>
    <div class="h-[32px] bg-[#4a4a4a] flex flex-col text-[#bdbdbd]">
      <div class="flex-1 flex items-center gap-[2px] px-px"><svg class="size-[8px]"><use href="#square"/></svg><svg class="w-[4px] h-[8px]"><use href="#spin"/></svg><label for="bm" class="sr-only">Blending mode</label><span class="relative ml-[2px] w-[36px] h-[9px] bg-[#585858] text-[#e4e4e4]"><select id="bm" class="appearance-none w-full h-[9px] pl-[7px]"><option>Normal</option></select><svg class="absolute right-px top-px w-[4px] h-[7px]"><use href="#spin"/></svg></span><i class="ml-[2px] flex-1 h-[5px] bg-[repeating-conic-gradient(#fff_0_25%,#aaa_0_50%)] bg-size-[4px_4px] border-r-2 border-[#888]"></i><span class="text-[#e4e4e4]">100</span><svg class="w-[4px] h-[8px]"><use href="#spin"/></svg></div>
      <div class="flex-1 flex items-center justify-end gap-[2px]"><span class="flex items-center gap-[3px]"><svg class="size-[7px]"><use href="#layers2"/></svg><svg class="size-[7px]"><use href="#clip"/></svg><svg class="size-[7px]"><use href="#refer"/></svg><svg class="size-[7px] text-[#ddd]"><use href="#lock"/></svg><svg class="size-[7px]"><use href="#tone"/></svg></span><span class="flex items-center gap-[2px] pl-[2px] text-[#777]"><svg class="size-[7px]"><use href="#marquee"/></svg><svg class="w-[4px] h-[7px]"><use href="#spin"/></svg><svg class="size-[7px] ml-[3px]"><use href="#ruler"/></svg><svg class="w-[4px] h-[7px]"><use href="#spin"/></svg></span><span class="flex items-center bg-[#606a85] h-[9px] gap-[2px] px-px"><svg class="size-[8px]" viewBox="0 0 12 12"><path d="M4 4h8v8H4z" fill="#fff"/><path d="M0 0h8v8H0z" fill="#2c7fe8"/></svg><svg class="w-[4px] h-[7px]"><use href="#spin"/></svg></span></div>
      <div class="flex-1 flex items-center gap-[2px] px-px"><svg class="size-[7px] mr-auto"><use href="#list"/></svg><svg class="size-[8px]"><use href="#new"/></svg><svg class="size-[8px]"><use href="#new"/></svg><svg class="size-[8px]"><use href="#folder"/></svg><svg class="size-[7px] text-[#777]"><use href="#layers2"/></svg><svg class="size-[8px]"><use href="#layers2"/></svg><svg class="size-[7px] text-white"><use href="#mask"/></svg><svg class="size-[7px] text-[#777] ml-px"><use href="#layers2"/></svg><svg class="size-[8px] text-[#777]"><use href="#trash"/></svg></div>
    </div>
    <div class="flex-1 bg-[#434343] pt-px">
      <div class="flex h-[15px] items-center border-b border-[#303030] pr-[5px]"><button aria-label="Hide Layer 1" class="w-[9px] grid place-items-center"><svg class="size-[7px]"><use href="#eye"/></svg></button><span class="w-[10px] h-full grid place-items-center border-x border-[#333]"><svg class="size-[6px]"><use href="#nib"/></svg></span><div class="flex-1 h-full bg-[#606a85] flex items-center gap-[4px] pl-px text-[5px] leading-[6px]"><i class="w-[16px] h-[13px] border border-[#ddd] bg-[repeating-conic-gradient(#fff_0_25%,#bbb_0_50%)] bg-size-[4px_4px]"></i><span>100 %&nbsp; Normal<br>Layer 1</span></div></div>
      <div class="flex h-[15px] items-center border-b border-[#303030] pr-[5px]"><button aria-label="Hide Paper" class="w-[9px] grid place-items-center"><svg class="size-[7px]"><use href="#eye"/></svg></button><span class="w-[10px] h-full grid place-items-center border-x border-[#333]"></span><div class="flex-1 h-full flex items-center gap-[6px] pl-[2px]"><i class="w-[15px] h-[12px] bg-white"></i><svg class="w-[7px] h-[9px] self-start" viewBox="0 0 8 10"><path d="M0 0h8v10H3L0 7z" fill="#fff"/><path d="M5.500 2q-3 0-3 3t3 3" fill="none" stroke="#333"/></svg><span class="self-end -ml-[3px]">Paper</span></div></div>
    </div>
  </aside>
</main>

<!-- Dock -->
<footer class="h-[43px] shrink-0 flex justify-center items-start border-t-3 border-[#343434] bg-[linear-gradient(to_right,#0c0322_0%,#10052c_35%,#220a4c_50%,#4c1280_62%,#4c1280_72%,#2a0b58_88%,#14063a_100%)]">
  <div id="dock" class="h-[38px] rounded-[9px] bg-white/5 border border-white/8 flex items-start pt-[3px]"></div>
</footer>

<script>
const use = (n, c) => `<svg class="${c}"><use href="#${n}"/></svg>`;

document.getElementById('tools').innerHTML = [
  ['search','hand','object','move','marquee','wand','dropper'],
  ['pen','pencil','brush','airbrush','spark','eraser','blend','liquify'],
  ['bucket','gradient','line','frame','ruler','text','balloon','correct']
].map((g, i) => `<div class="${i === 0 ? 'h-[83px]' : 'h-[95px]'} flex flex-col justify-around items-center ${i ? 'border-t border-[#777]' : ''}">` +
  g.map(n => `<button aria-label="${n}" class="${n === 'pen' ? 'w-[12px] h-[11px] bg-[#66759f] text-white' : 'w-[12px] h-[11px]'} grid place-items-center">${use(n, 'size-[9px]')}</button>`).join('') + '</div>').join('');

const thin = 'M7 6.500C16 2 24 1.500 30 4s16 6 24 1.500C46 9.500 38 8.500 29 5.500S16 2.500 7 6.500z';
const thick = 'M4 9C16 1.500 24 1 31 3.500s16 5 25-1.500C49 9 39 9.500 30 6.500S14 4 4 9z';
document.getElementById('brushes').innerHTML = ['G-pen','Real G-Pen','Mapping pen','Turnip pen','Calligraphy','Textured pen'].map((n, i) =>
  `<button class="h-[16px] relative ${i ? 'bg-[#424242]' : 'bg-[#606b88]'}"><svg class="absolute inset-0 w-full h-full" viewBox="0 0 72 16"><path d="${i === 4 ? thick : thin}" fill="${i === 4 ? '#fff' : 'url(#fade)'}" stroke="${i === 4 ? '#fff' : 'url(#fade)'}" stroke-width=".5"/></svg><span class="absolute right-px bottom-0 leading-[7px] ${i ? '' : 'bg-[#4a5268] pl-[3px]'}">${n}</span></button>`).join('');

const sizes = [['0.7',1],['1',1],['1.5',1],['2',1],['2.5',2],['3',2],['4',2],['5',3],['6',3],['7',3],['8',4],['10',5],['12',6],['15',7],['17',8],['20',9],['25',11],['30',11],['40',11],['50',11],['60',11],['70',11],['80',11],['100',11],['120',11]];
document.getElementById('sizes').innerHTML = sizes.map(([n, d]) =>
  `<button class="flex flex-col items-center justify-end relative ${n === '10' ? 'bg-[#5a6684]' : 'bg-[#424242]'}"><span class="absolute inset-x-0 top-[1px] h-[11px] grid place-items-center"><i class="rounded-full bg-white" style="width:${d}px;height:${d}px"></i></span><span class="relative leading-[7px] ${d > 8 ? 'text-white bg-[#424242]/70' : ''}">${n}</span></button>`).join('') +
  [150, 170, 200, 250, 300].map(n => `<button aria-label="${n}" class="bg-[#424242] flex justify-center pt-px"><i class="size-[11px] rounded-full bg-white"></i></button>`).join('');

const marks = ['M4 4.500l6 5M10 4.500l-6 5','M5 4.500h4v5H5zM5 7h4','M4 4.500l6 5M10 4.500l-6 5','M4 4.500h6v5H4z','M4 4.500h6v5H4zM7 7h3','M4 5h2M8 5h2M4 9h2M8 9h2M7 5v4','M4 9h6V6L7 8 4 6z','M4 9l6-5M4 5v4h6','M7 4v4M5 6l2 2 2-2M4 9.500h6','M7 4v6M5 4h4v3H5z'];
document.getElementById('mats').innerHTML = marks.map(m =>
  `<button aria-label="Material" class="w-[15px] h-[14px] bg-[#4f4f4f] text-[#a8a8a8] grid place-items-center"><svg class="w-[10px] h-[9px]" viewBox="0 0 14 12"><path d="M1 11V1h4.500l1 1.800H13V11z${m}" fill="none" stroke="currentColor" stroke-width="1.200"/></svg></button>`).join('');

const box = (f, inner) => `<rect width="24" height="24" rx="5.500" fill="${f}"/>${inner}`;
const petals = ['#f5a623','#f0d020','#9ccc3c','#4caf7a','#4a90d9','#8a6bd0','#d065a8','#ee5a4a'];
const apps = [
  ['Finder', box('#e8edf2','<path d="M5.500 0H14q-4 7-3.500 13H13q0 6 1.500 11h-9A5.500 5.500 0 0 1 0 18.500v-13A5.500 5.500 0 0 1 5.500 0z" fill="#2f8ff0"/><path d="M5 16q7 5 14 0M6.500 7.500v2.500M17.500 7.500v2.500" fill="none" stroke="#1d2a44" stroke-width="1.100"/>'), '', 1],
  ['Launchpad', box('#a9adb8', ['#6bd06b','#8ac34a','#f0a030','#e04848','#d8d8d8','#e86a8a','#8a5cd8','#4aa0e8','#48c078'].map((c,i)=>`<rect x="${4+i%3*6}" y="${4+Math.floor(i/3)*6}" width="4.500" height="4.500" rx="1" fill="${c}"/>`).join(''))],
  ['Chrome', box('#f6f6f6','<circle cx="12" cy="12" r="10" fill="#fbc62e"/><path d="M12 12L3.300 7A10 10 0 0 1 20.700 7z" fill="#e24034"/><path d="M12 2A10 10 0 0 1 20.700 7H12z" fill="#e24034"/><path d="M3.300 7A10 10 0 0 0 12 22l4.300-7.500L7.700 14.500z" fill="#2ea650"/><circle cx="12" cy="12" r="5" fill="#fff"/><circle cx="12" cy="12" r="3.900" fill="#2f76e8"/>'), '', 1],
  ['Safari', box('#e6e9ee','<circle cx="12" cy="12" r="10.500" fill="#2489e6"/><path d="M19 5l-5.500 8.500-3-3z" fill="#f04438"/><path d="M5 19l5.500-8.500 3 3z" fill="#f4f4f4"/>')],
  ['Messages', box('#5fd862','<ellipse cx="12" cy="11.500" rx="8.500" ry="7" fill="#f2fff0"/><path d="M6 16q0 3-2 4 4 0 5.500-2.500z" fill="#f2fff0"/>'), '8'],
  ['Clip Studio', box('#d9dadc','<path d="M21 8.500C17 2.500 4 5 2.800 12c-.8 6.500 9 9 14.500 6 5.500-3.200 4-9-1.500-8.800-4.500.3-9 2.300-8 5 1 2.300 5.500 1.800 8.500-.7" fill="none" stroke="#66686c" stroke-width="2.400" stroke-linecap="round"/>'), '', 1],
  ['Mail', box('#2f8cf2','<rect x="3.500" y="6" width="17" height="12" rx="1.500" fill="#f0f4f8"/><path d="M4 7l8 6.500L20 7M4 17.500l6-5.500M20 17.500L14 12" fill="none" stroke="#7a98b8" stroke-width=".9"/>')],
  ['Maps', box('#e8eadf','<path d="M0 7V5.500A5.500 5.500 0 0 1 5.500 0H7v14L0 20z" fill="#69c35e"/><path d="M7 0h5v24H7z" fill="#3f8cf0"/><path d="M12 0h6.500A5.500 5.500 0 0 1 24 5.500V10z" fill="#67c45c"/><path d="M12 6l12 10v3a5 5 0 0 1-3 4.600L12 15z" fill="#f4cf50"/><path d="M0 17l6-3 2 10H5.500A5.500 5.500 0 0 1 0 18.500z" fill="#ee9ab0"/><circle cx="10" cy="15" r="6" fill="#2479ea" stroke="#fff"/><path d="M10 11l3 7-3-1.500L7 18z" fill="#fff"/>')],
  ['Photos', box('#fafafa', petals.map((c,i)=>`<ellipse cx="12" cy="7" rx="2.700" ry="4.300" fill="${c}" opacity=".88" transform="rotate(${i*45} 12 12)"/>`).join(''))],
  ['FaceTime', box('#56d25c','<rect x="3.500" y="7" width="12" height="10" rx="2.500" fill="#f0fff0"/><path d="M16.500 10.500l4.500-3v9l-4.500-3z" fill="#f0fff0"/>'), '1'],
  ['Calendar', 'cal'],
  ['Contacts', box('#a27c4d','<path d="M22 5h2v4h-2z" fill="#999"/><path d="M22 10h2v4h-2z" fill="#e69a3a"/><path d="M22 15h2v4h-2z" fill="#4b9ee0"/><circle cx="11.500" cy="12" r="8" fill="none" stroke="#7d5d36" stroke-width="1.200"/><circle cx="11.500" cy="10" r="3" fill="#7d5d36"/><path d="M6 17q5.500-6 11 0-5.500 5-11 0z" fill="#7d5d36"/>')],
  ['Reminders', box('#fafafa','<circle cx="5" cy="6" r="2" fill="#2f7fe8"/><circle cx="5" cy="12" r="2" fill="#e64a3c"/><circle cx="5" cy="18" r="2" fill="#f0953a"/><path d="M9 6h11M9 12h11M9 18h11" stroke="#ccc"/>'), '26'],
  ['Notes', box('#f8f6f0','<path d="M0 7V5.500A5.500 5.500 0 0 1 5.500 0h13A5.500 5.500 0 0 1 24 5.500V7z" fill="#f8c83a"/><path d="M2 12h20M2 17h20" stroke="#ddd"/>')],
  ['TV', 'tv'],
  ['Music', box('#f2495c','<path d="M9 17V7l8.500-2v10" fill="none" stroke="#fff" stroke-width="1.800"/><path d="M9 8l8.500-2" stroke="#fff" stroke-width="2.500"/><ellipse cx="7" cy="17.300" rx="2.800" ry="2.200" fill="#fff"/><ellipse cx="15.500" cy="15.300" rx="2.800" ry="2.200" fill="#fff"/>')],
  ['Podcasts', box('#a94fdb','<circle cx="12" cy="11" r="8" fill="none" stroke="#fff" stroke-width="1.300"/><circle cx="12" cy="11" r="4.700" fill="none" stroke="#fff" stroke-width="1.300"/><path d="M8.500 14h7l-1.500 8h-4z" fill="#a94fdb"/><circle cx="12" cy="10.800" r="2.300" fill="#fff"/><path d="M10 14.500q2-1 4 0L13.200 21q-1.200 1-2.400 0z" fill="#fff"/>')],
  ['News', box('#fafafa','<path d="M5 5h4l10 10v4h-4L5 9z" fill="#e8354f"/><path d="M5 12l7 7H5zM12 5h7v7z" fill="#f06a7c"/>')],
  ['App Store', box('#2d93f2','<path d="M13.500 4.500L6.500 18M10.500 4.500L18 18M4 14.500h9M16.500 14.500H20" stroke="#fff" stroke-width="1.900" stroke-linecap="round"/>')],
  ['Settings', box('#a6a8ac','<circle cx="12" cy="12" r="9" fill="#3a3c40" stroke="#222" stroke-dasharray="1 .8"/><circle cx="12" cy="12" r="6.500" fill="none" stroke="#a6a8ac" stroke-width="1.400"/><path d="M12 12h6.500M12 12l-3.500-6M12 12l-3.500 6" stroke="#a6a8ac" stroke-width="1.500"/><circle cx="12" cy="12" r="2" fill="#222"/>'), '', 1],
  ['|', 'w-[12px]'],
  ['Wacom', '<circle cx="12" cy="12" r="14.500" fill="#fff"/><path d="M6.500 7.500v5q0 4 2.800 4t2.700-4v-5 5q0 4 2.800 4t2.700-4v-5" fill="none" stroke="#3a8fe0" stroke-width="2"/>', '', 1],
  ['Reports', '<path d="M-3 12L12 8l15 5L13 24z" fill="#3a3a3e"/><path d="M-3 12l16 8v4L-2 15z" fill="#5c5c62"/><path d="M10-1q17-1 17 12l-2 3-6-5Q17 4 10 3z" fill="#c83434"/><path d="M1 2l10-1 3 10-12 2z" fill="#f4f4f4"/><path d="M3 5l7-.5M4 8l7-.5M5 11l7-.5" stroke="#c44" stroke-width=".9"/>'],
  ['Windows', '<circle cx="12" cy="14" r="11" fill="#f6f6f6"/><path d="M6.500 8.500h5v5h-5z" fill="#ee5a3a"/><path d="M12.500 8.500h5v5h-5z" fill="#7fba3c"/><path d="M6.500 14.500h5v5h-5z" fill="#3a9be8"/><path d="M12.500 14.500h5v5h-5z" fill="#f5b82e"/><path d="M9.500-3h5v4h2.500l-5 5.500L7 1h2.500z" fill="#5fae5f"/>', '1', 1],
  ['Clip Studio Paint', box('#e2e2e4','<path d="M14.500 12.500c-3 2.500-9 2-10.500-1.500C2.500 6.500 8 3.500 13 3.800c6 .3 8.500 4.500 6.500 9-1.500 3.200-4.500 5.700-7.500 7-1.500-.5-1.500-2 .5-3.500M8 9.500c2-2.500 6-2.500 6.500 0" fill="none" stroke="#35363a" stroke-width="2.300" stroke-linecap="round"/>'), '', 1],
  ['|', 'w-[14px]'],
  ['Window', '<path d="M-1-2h27v27H-1z" fill="#1b1b20"/><path d="M2 3h9M2 6h9M2 9h9M2 12h9M2 15h9M2 19h8M14 3h9M14 12h9M14 15h6" stroke="#3c3c44" stroke-width="1.300"/><rect x="16" y="16" width="10" height="10" rx="2" fill="#999"/><circle cx="21" cy="21" r="3.500" fill="none" stroke="#333"/>'],
  ['Browser', '<path d="M-2 3h28v18H-2z" fill="#1c1c26"/><path d="M0 6h24M0 9h6M0 12h6M0 15h6M18 9h6" stroke="#3c3c4c"/><circle cx="20" cy="21" r="5.500" fill="#fff"/><path d="M17.500 19.500v1.500q1.200 2.500 2.500 0 1.200 2.500 2.500 0v-1.500" fill="none" stroke="#3a8fe0"/>'],
  ['Bin', '<path d="M2 2l3 22q7 4 14 0l3-22z" fill="#8b8d92"/><path d="M6 6l1.500 18M10 6l.7 19M14 6l-.7 19M18 6l-1.500 18" stroke="#a5a7ab"/><ellipse cx="12" cy="2" rx="10" ry="3.300" fill="#66686c" stroke="#c4c6ca"/><path d="M4 1l4-3 3 2 4-3 4 3 1 2-6 2-7-1z" fill="#f0f0f0"/><path d="M8-1l3 3M15-2l-2 4" stroke="#8888aa"/>']
];
document.getElementById('dock').innerHTML = apps.map(([name, art, badge, run]) => {
  if (name === '|') return `<div class="${art === 'w-[12px]' ? 'w-[12px]' : 'w-[14px]'} h-[28px] flex justify-center"><i class="w-px bg-white/20"></i></div>`;
  let pic = `<svg class="size-[24px] overflow-visible" viewBox="0 0 24 24">${art}</svg>`;
  if (art === 'cal') pic = `<span class="size-[24px] rounded-[6px] bg-[#fafafa] overflow-hidden flex flex-col text-center"><span class="h-[7px] bg-[#e84c40] text-white text-[5px] leading-[7px]">APR</span><span class="text-[14px] leading-[16px] font-normal text-[#333]">11</span></span>`;
  if (art === 'tv') pic = `<span class="size-[24px] rounded-[6px] bg-[#17201f] flex items-center justify-center gap-px text-white text-[10px]"><svg class="w-[7px] h-[8px]"><use href="#apple"/></svg>tv</span>`;
  return `<a href="#" aria-label="${name}" class="w-[32px] flex flex-col items-center relative pt-[2px]">${pic}${badge ? `<b class="absolute right-0 -top-[2px] min-w-[11px] h-[11px] rounded-full bg-[#e8463e] text-white text-center text-[6px] leading-[11px] font-medium">${badge}</b>` : ''}${run ? '<i class="size-[2px] rounded-full bg-[#c8c0dc] mt-[4px]"></i>' : ''}</a>`;
}).join('');
</script>
</body>
</html>
